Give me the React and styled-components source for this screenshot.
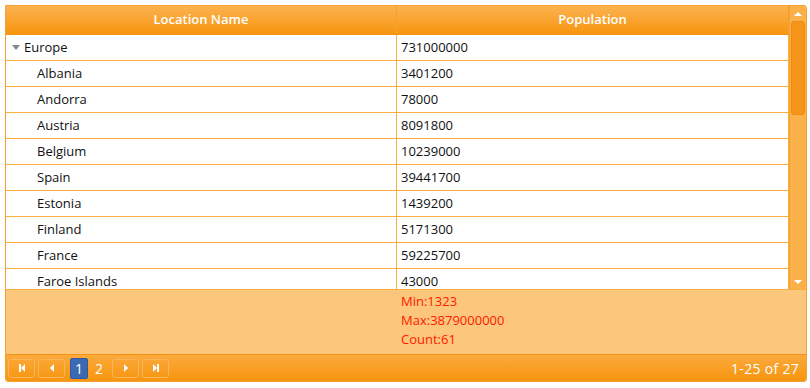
import React from "react";
import styled, { createGlobalStyle } from "styled-components";

const Global = createGlobalStyle`
  html, body { margin: 0; padding: 0; background: #fff; }
  body { font-family: "Open Sans", "Noto Sans", sans-serif; }
`;

const Page = styled.div`
  padding: 5px 4px 0 5px;
  width: 810px;
  box-sizing: border-box;
`;

const Grid = styled.div`
  width: 802px;
  height: 377px;
  border: 1px solid #f5a031;
  border-radius: 0 3px 3px 3px;
  box-sizing: border-box;
  display: flex;
  flex-direction: column;
  overflow: hidden;
  font-size: 13px;
`;

const Top = styled.div`
  display: flex;
  height: 283px;
`;

const Main = styled.div`
  flex: 1;
  display: flex;
  flex-direction: column;
  min-width: 0;
`;

const HeaderRow = styled.div`
  display: flex;
  height: 29px;
  box-sizing: border-box;
  border-bottom: 1px solid #f29214;
  background: linear-gradient(#fbb250, #f7950f);
`;

const HeaderCell = styled.div`
  width: ${(p) => p.w}px;
  flex: ${(p) => (p.grow ? 1 : "none")};
  box-sizing: border-box;
  border-right: 1px solid #f3a034;
  color: #fff;
  font-weight: 600;
  display: flex;
  align-items: center;
  justify-content: center;
  padding-bottom: 2px;
`;

const Body = styled.div`
  flex: 1;
  overflow: hidden;
  background: #fff;
`;

const Row = styled.div`
  display: flex;
  height: 26px;
  box-sizing: border-box;
  border-bottom: 1px solid #fbae3c;
`;

const Cell = styled.div`
  width: ${(p) => p.w}px;
  flex: ${(p) => (p.grow ? 1 : "none")};
  box-sizing: border-box;
  border-right: 1px solid #fbae3c;
  display: flex;
  align-items: center;
  padding-left: ${(p) => p.pad}px;
  color: #111;
  padding-bottom: 1px;
`;

const Toggle = styled.span`
  width: 0;
  height: 0;
  border-left: 4px solid transparent;
  border-right: 4px solid transparent;
  border-top: 5px solid #888;
  margin-right: 4px;
  margin-top: 1px;
`;

const Scrollbar = styled.div`
  width: 17px;
  background: #fbb149;
  border-left: 1px solid #f3a034;
  box-sizing: border-box;
  display: flex;
  flex-direction: column;
  align-items: center;
`;

const Arrow = styled.div`
  height: 15px;
  display: flex;
  align-items: center;
  justify-content: center;
  width: 100%;
`;

const Tri = styled.span`
  width: 0;
  height: 0;
  border-left: 4px solid transparent;
  border-right: 4px solid transparent;
  ${(p) =>
    p.up ? "border-bottom: 4px solid #fff;" : "border-top: 4px solid #fff;"}
`;

const Track = styled.div`
  flex: 1;
  width: 100%;
  padding: 0 1px;
  box-sizing: border-box;
`;

const Thumb = styled.div`
  height: 94px;
  background: #f7941a;
  border: 1px solid #ef8a10;
  border-radius: 3px;
  box-sizing: border-box;
`;

const AggRow = styled.div`
  display: flex;
  height: 65px;
  background: #fcc67c;
  border-top: 1px solid #fbae3c;
  box-sizing: border-box;
`;

const AggCell = styled.div`
  width: ${(p) => p.w}px;
  flex: ${(p) => (p.grow ? 1 : "none")};
  box-sizing: border-box;
  padding: 2px 0 0 4px;
  color: #ff1a00;
`;

const AggLine = styled.div`
  height: 19px;
  line-height: 19px;
`;

const Pager = styled.div`
  height: 27px;
  flex: none;
  border-top: 1px solid #f29214;
  background: linear-gradient(#fbaa3c, #f7950f);
  display: flex;
  align-items: center;
  padding: 0 7px 0 2px;
  box-sizing: border-box;
  margin-top: auto;
`;

const PagerBtn = styled.div`
  width: 27px;
  height: 19px;
  box-sizing: border-box;
  border: 1px solid #fbb55a;
  border-radius: 3px;
  margin-right: 3px;
  display: flex;
  align-items: center;
  justify-content: center;
  margin-left: ${(p) => p.ml || 0}px;
`;

const PageNum = styled.div`
  height: 21px;
  min-width: 16px;
  padding: 0 4px;
  box-sizing: border-box;
  display: flex;
  align-items: center;
  justify-content: center;
  color: #fff;
  font-size: 14px;
  border-radius: 2px;
  margin-left: ${(p) => p.ml || 0}px;
  background: ${(p) => (p.active ? "#3b6ab3" : "transparent")};
  border: 1px solid ${(p) => (p.active ? "#2f5aa0" : "transparent")};
`;

const Info = styled.div`
  margin-left: auto;
  color: #fff;
  font-size: 14px;
  letter-spacing: 0.3px;
`;

const Glyph = ({ dir, bar }) => (
  <svg width="10" height="10" viewBox="0 0 10 10">
    {dir === "left" ? (
      <>
        {bar && <rect x="2" y="1" width="2" height="8" fill="#fff" />}
        <polygon points={bar ? "4,5 8,1 8,9" : "3,5 7,1 7,9"} fill="#fff" />
      </>
    ) : (
      <>
        <polygon points={bar ? "2,1 6,5 2,9" : "3,1 7,5 3,9"} fill="#fff" />
        {bar && <rect x="6" y="1" width="2" height="8" fill="#fff" />}
      </>
    )}
  </svg>
);

const rows = [
  ["Albania", "3401200"],
  ["Andorra", "78000"],
  ["Austria", "8091800"],
  ["Belgium", "10239000"],
  ["Spain", "39441700"],
  ["Estonia", "1439200"],
  ["Finland", "5171300"],
  ["France", "59225700"],
  ["Faroe Islands", "43000"],
];

export default function App() {
  return (
    <Page>
      <Global />
      <Grid>
        <Top>
          <Main>
            <HeaderRow>
              <HeaderCell w={391}>Location Name</HeaderCell>
              <HeaderCell grow>Population</HeaderCell>
            </HeaderRow>
            <Body>
              <Row>
                <Cell w={391} pad={6}>
                  <Toggle />
                  Europe
                </Cell>
                <Cell grow pad={4}>731000000</Cell>
              </Row>
              {rows.map(([n, p]) => (
                <Row key={n}>
                  <Cell w={391} pad={31}>{n}</Cell>
                  <Cell grow pad={4}>{p}</Cell>
                </Row>
              ))}
            </Body>
          </Main>
          <Scrollbar>
            <Arrow>
              <Tri up />
            </Arrow>
            <Track>
              <Thumb />
            </Track>
            <Arrow>
              <Tri />
            </Arrow>
          </Scrollbar>
        </Top>
        <AggRow>
          <AggCell w={391} />
          <AggCell grow>
            <AggLine>Min:1323</AggLine>
            <AggLine>Max:3879000000</AggLine>
            <AggLine>Count:61</AggLine>
          </AggCell>
        </AggRow>
        <Pager>
          <PagerBtn>
            <Glyph dir="left" bar />
          </PagerBtn>
          <PagerBtn>
            <Glyph dir="left" />
          </PagerBtn>
          <PageNum active ml={2}>1</PageNum>
          <PageNum ml={2}>2</PageNum>
          <PagerBtn ml={4}>
            <Glyph dir="right" />
          </PagerBtn>
          <PagerBtn>
            <Glyph dir="right" bar />
          </PagerBtn>
          <Info>1-25 of 27</Info>
        </Pager>
      </Grid>
    </Page>
  );
}
